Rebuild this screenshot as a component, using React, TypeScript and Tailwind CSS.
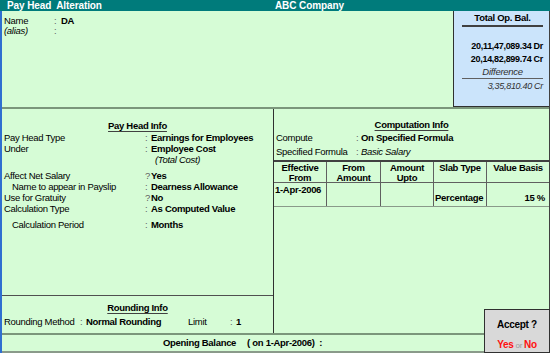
const font = { fontFamily: '"Liberation Sans", Arial, sans-serif' }

const payHeadRows = [
  { label: "Pay Head Type", sep: ":", value: "Earnings for Employees", indent: false, gap: false },
  { label: "Under", sep: ":", value: "Employee Cost", indent: false, gap: false },
  { label: "", sep: "", value: "(Total Cost)", indent: false, gap: false, sub: true },
  { label: "Affect Net Salary", sep: "?", value: "Yes", indent: false, gap: true },
  { label: "Name to appear in Payslip", sep: ":", value: "Dearness Allowance", indent: true, gap: false },
  { label: "Use for Gratuity", sep: "?", value: "No", indent: false, gap: false },
  { label: "Calculation Type", sep: ":", value: "As Computed Value", indent: false, gap: false },
  { label: "Calculation Period", sep: ":", value: "Months", indent: true, gap: true },
]

const slabCols = [
  { w: "w-[53px]", head: ["Effective", "From"] },
  { w: "w-[54px]", head: ["From", "Amount"] },
  { w: "w-[53px]", head: ["Amount", "Upto"] },
  { w: "w-[53px]", head: ["Slab Type"] },
  { w: "flex-1", head: ["Value Basis"] },
]

function PayHeadInfo() {
  return (
    <div className="flex-1 pt-[10px]">
      <div className="h-[13px] text-center leading-[13px]">
        <span className="font-bold underline decoration-[#404040] underline-offset-2">Pay Head Info</span>
      </div>
      <div className="mt-[1px]">
        {payHeadRows.map((r, i) => (
          <div key={i} className={`flex h-[11px] items-center whitespace-nowrap ${r.gap ? "mt-[5px]" : ""}`}>
            <div className={`w-[143px] shrink-0 ${r.indent ? "pl-[10px]" : "pl-[2px]"}`}>{r.label}</div>
            <div className="w-[6px] shrink-0 text-[#606060]">{r.sep}</div>
            {r.sub ? (
              <div className="pl-[4px] italic">{r.value}</div>
            ) : (
              <div className="font-bold">{r.value}</div>
            )}
          </div>
        ))}
      </div>
    </div>
  )
}

function RoundingInfo() {
  return (
    <div className="h-[38px] border-t border-[#505050] pt-[5px]">
      <div className="h-[13px] text-center leading-[13px]">
        <span className="font-bold underline decoration-[#404040] underline-offset-2">Rounding Info</span>
      </div>
      <div className="mt-[3px] flex h-[11px] items-center whitespace-nowrap">
        <div className="w-[78px] shrink-0 pl-[2px]">Rounding Method</div>
        <div className="w-[6px] shrink-0 text-[#606060]">:</div>
        <div className="w-[102px] shrink-0 font-bold">Normal Rounding</div>
        <div className="w-[42px] shrink-0">Limit</div>
        <div className="w-[6px] shrink-0 text-[#606060]">:</div>
        <div className="font-bold">1</div>
      </div>
    </div>
  )
}

function ComputationInfo() {
  return (
    <div className="relative flex-1 pt-[9px]">
      <div className="h-[13px] text-center leading-[13px]">
        <span className="font-bold underline decoration-[#404040] underline-offset-2">Computation Info</span>
      </div>
      <div className="mt-[1px] flex h-[12px] items-center whitespace-nowrap">
        <div className="w-[82px] shrink-0 pl-[2px]">Compute</div>
        <div className="w-[5px] shrink-0 text-[#606060]">:</div>
        <div className="font-bold">On Specified Formula</div>
      </div>
      <div className="mt-[2px] flex h-[12px] items-center whitespace-nowrap">
        <div className="w-[82px] shrink-0 pl-[2px]">Specified Formula</div>
        <div className="w-[5px] shrink-0 text-[#606060]">:</div>
        <div className="italic">Basic Salary</div>
      </div>
      <div className="mt-[2px] border-t-2 border-[#404040]">
        <div className="flex h-[21px] border-b border-[#606060]">
          {slabCols.map((c, i) => (
            <div
              key={i}
              className={`${c.w} flex flex-col items-center whitespace-nowrap pt-[1px] font-bold leading-[10px] ${i < 4 ? "border-r border-[#606060]" : ""}`}
            >
              {c.head.map((h) => (
                <span key={h}>{h}</span>
              ))}
            </div>
          ))}
        </div>
        <div className="flex h-[24px] border-b border-[#8a9a8a] whitespace-nowrap font-bold">
          <div className="w-[53px] border-r border-[#606060] pl-[1px] pt-[1px] leading-[11px]">1-Apr-2006</div>
          <div className="w-[54px] border-r border-[#606060]" />
          <div className="w-[53px] border-r border-[#606060]" />
          <div className="flex w-[53px] items-end border-r border-[#606060] pb-[1px] pl-[1px]">Percentage</div>
          <div className="flex flex-1 items-end justify-end pb-[1px] pr-[4px]">15 %</div>
        </div>
      </div>
    </div>
  )
}

export default function App() {
  return (
    <div
      className="h-[353px] w-[550px] overflow-hidden bg-[#d6fcd6] text-[9.5px] tracking-[-0.3px] text-black"
      style={font}
    >
      <div className="flex h-[11px] items-center bg-[#007b7b] text-[10px] font-bold leading-[11px] tracking-[-0.1px] text-white">
        <div className="w-[275px] pl-[7px]">Pay Head&nbsp; Alteration</div>
        <div>ABC Company</div>
      </div>

      <div className="relative flex h-[342px] flex-col border-l-2 border-r border-l-[#2f6fd0] border-r-[#404040]">
        <div className="flex h-[96px]">
          <div className="flex-1 pt-[5px]">
            <div className="flex h-[10px] items-center">
              <div className="w-[52px] pl-[2px]">Name</div>
              <div className="w-[7px] text-[#606060]">:</div>
              <div className="font-bold">DA</div>
            </div>
            <div className="flex h-[10px] items-center">
              <div className="w-[52px] pl-[2px] italic">(alias)</div>
              <div className="w-[7px] text-[#606060]">:</div>
            </div>
          </div>
          <div className="flex w-[96px] flex-col border-b border-l border-[#303030] bg-[#cbe4fb] pr-[6px] text-right font-bold">
            <div className="mt-[1px] pl-[8px] text-center leading-[12px]">Total Op. Bal.</div>
            <div className="ml-[8px] mt-[1px] border-t-2 border-[#404040]" />
            <div className="mt-[13px] text-[9px] leading-[13px]">20,11,47,089.34 Dr</div>
            <div className="text-[9px] leading-[13px]">20,14,82,899.74 Cr</div>
            <div className="pl-[8px] text-center font-normal italic leading-[12px] text-[#303030]">Difference</div>
            <div className="ml-[8px] border-t border-[#606060]" />
            <div className="mt-[1px] text-[9px] font-normal italic leading-[12px] text-[#303030]">3,35,810.40 Cr</div>
          </div>
        </div>

        <div className="h-[2px] bg-[#7b967b]" />

        <div className="flex h-[224px]">
          <div className="flex w-[272px] flex-col border-r border-[#303030]">
            <PayHeadInfo />
            <RoundingInfo />
          </div>
          <ComputationInfo />
        </div>

        <div className="h-[2px] bg-[#7b967b]" />

        <div className="flex h-[16px] items-center whitespace-nowrap pl-[161px] font-bold">
          <span>Opening Balance</span>
          <span className="ml-[11px]">( on 1-Apr-2006)&nbsp; :</span>
        </div>
        <div className="h-[2px] bg-[#8a9a8a]" />

        <div className="absolute bottom-0 right-[-1px] flex h-[44px] w-[66px] flex-col items-center border border-[#303030] bg-[#d9d9d9] font-bold">
          <div className="mt-[9px] text-[10px] leading-[12px]">Accept ?</div>
          <div className="mt-[7px] leading-[13px]">
            <span className="text-[10px] text-[#ff1010]">Yes</span>
            <span className="text-[8px] font-normal text-[#9a9a9a]"> or </span>
            <span className="text-[10px] text-[#ff1010]">No</span>
          </div>
        </div>
      </div>
    </div>
  )
}
